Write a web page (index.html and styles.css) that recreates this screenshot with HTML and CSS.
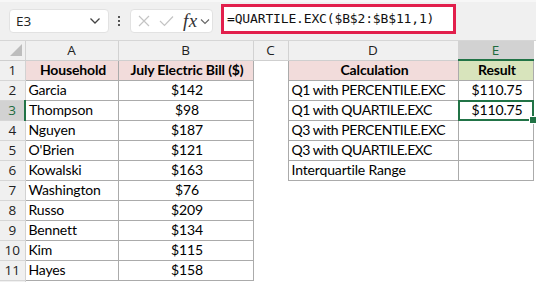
FILE: index.html
```html
<!DOCTYPE html>
<html>
<head>
<meta charset="utf-8">
<link rel="stylesheet" href="styles.css">
</head>
<body>
<div class="toolbar">
  <div class="namebox">
    <span class="ref">E3</span>
    <svg class="chev" width="12" height="8" viewBox="0 0 12 8"><path d="M1.5 1.5 L6 6 L10.5 1.5" fill="none" stroke="#444" stroke-width="1.3"/></svg>
  </div>
  <div class="dots"><i></i><i></i><i></i></div>
  <div class="fxbox">
    <svg class="ico" width="12" height="12" viewBox="0 0 12 12"><path d="M1 1 L11 11 M11 1 L1 11" stroke="#c4c4c4" stroke-width="1.2" fill="none"/></svg>
    <svg class="ico ok" width="15" height="12" viewBox="0 0 15 12"><path d="M1 6 L5.5 10.5 L14 1.5" stroke="#c4c4c4" stroke-width="1.2" fill="none"/></svg>
    <span class="fx">fx</span>
    <svg class="chev2" width="10" height="7" viewBox="0 0 10 7"><path d="M1 1.5 L5 5.5 L9 1.5" fill="none" stroke="#666" stroke-width="1.1"/></svg>
  </div>
  <div class="formula">=QUARTILE.EXC($B$2:$B$11,1)</div>
</div>
<table class="sheet">
  <colgroup>
    <col class="c-rh"><col class="c-a"><col class="c-b"><col class="c-c"><col class="c-d"><col class="c-e">
  </colgroup>
  <tr class="hdr">
    <td class="corner"><svg width="12" height="12" viewBox="0 0 12 12"><path d="M12 0 L12 12 L0 12 Z" fill="#bdbdbd"/></svg></td>
    <td class="ch">A</td><td class="ch">B</td><td class="ch">C</td><td class="ch">D</td><td class="ch sel">E</td>
  </tr>
  <tr>
    <td class="rh">1</td><td class="b th pink">Household</td><td class="b th pink">July Electric Bill ($)</td><td></td><td class="b th pink">Calculation</td><td class="b th green">Result</td>
  </tr>
  <tr><td class="rh">2</td><td class="b">Garcia</td><td class="b ctr">$142</td><td></td><td class="b tight">Q1 with PERCENTILE.EXC</td><td class="b ctr">$110.75</td></tr>
  <tr><td class="rh rsel">3</td><td class="b">Thompson</td><td class="b ctr">$98</td><td></td><td class="b tight">Q1 with QUARTILE.EXC</td><td class="b ctr active">$110.75</td></tr>
  <tr><td class="rh">4</td><td class="b">Nguyen</td><td class="b ctr">$187</td><td></td><td class="b tight">Q3 with PERCENTILE.EXC</td><td class="b"></td></tr>
  <tr><td class="rh">5</td><td class="b">O'Brien</td><td class="b ctr">$121</td><td></td><td class="b tight">Q3 with QUARTILE.EXC</td><td class="b"></td></tr>
  <tr><td class="rh">6</td><td class="b">Kowalski</td><td class="b ctr">$163</td><td></td><td class="b">Interquartile Range</td><td class="b"></td></tr>
  <tr><td class="rh">7</td><td class="b">Washington</td><td class="b ctr">$76</td><td></td><td></td><td></td></tr>
  <tr><td class="rh">8</td><td class="b">Russo</td><td class="b ctr">$209</td><td></td><td></td><td></td></tr>
  <tr><td class="rh">9</td><td class="b">Bennett</td><td class="b ctr">$134</td><td></td><td></td><td></td></tr>
  <tr><td class="rh">10</td><td class="b">Kim</td><td class="b ctr">$115</td><td></td><td></td><td></td></tr>
  <tr><td class="rh">11</td><td class="b">Hayes</td><td class="b ctr">$158</td><td></td><td></td><td></td></tr>
  <tr class="tail"><td class="rh"></td><td></td><td></td><td></td><td></td><td></td></tr>
</table>
</body>
</html>
```
FILE: styles.css
```css
* { box-sizing: border-box; }
html, body { margin: 0; padding: 0; background: #fff; }
body { width: 536px; height: 282px; overflow: hidden; font-family: Lato, "Liberation Sans", sans-serif; }

.toolbar {
  height: 41px;
  background: #f0f0f0;
  border-bottom: 1px solid #d6d6d6;
  display: flex;
  align-items: flex-start;
  border-top: 2px solid #f7f7f7;
}
.namebox {
  margin: 7px 0 0 9px;
  width: 100px; height: 24px;
  background: #fff;
  border: 1px solid #e2e2e2;
  border-radius: 4px;
  display: flex; align-items: center; justify-content: space-between;
  padding: 0 7px 0 6px;
}
.ref { font-family: "Open Sans", sans-serif; font-size: 13.5px; color: #222; }
.dots { margin: 14px 0 0 9px; width: 3px; display: flex; flex-direction: column; gap: 2px; }
.dots i { display: block; width: 2px; height: 2px; background: #555; }
.fxbox {
  margin: 7px 0 0 9px;
  width: 83px; height: 24px;
  background: #fff;
  border: 1px solid #e2e2e2;
  border-radius: 4px;
  display: flex; align-items: center;
  padding-left: 7px;
}
.ico.ok { margin-left: 9px; }
.fx { font-family: "Liberation Serif", serif; font-style: italic; font-size: 19px; line-height: 20px; color: #333; margin-left: 9px; letter-spacing: 0.5px; }
.chev2 { margin-left: 2px; }
.formula {
  margin: 2px 0 0 8px;
  width: 235px; height: 30px;
  background: #fff;
  border: 3px solid #e21f4c;
  font-family: "DejaVu Sans Mono", monospace;
  font-size: 13px;
  letter-spacing: -0.15px;
  color: #111;
  line-height: 24px;
  padding-left: 3px;
  white-space: nowrap;
}

.sheet { border-collapse: collapse; table-layout: fixed; width: 533px; font-size: 14px; letter-spacing: -0.15px; color: #000; }
.c-rh { width: 25px; } .c-a { width: 93px; } .c-b { width: 135px; } .c-c { width: 35px; } .c-d { width: 170px; } .c-e { width: 75px; }
.sheet td { height: 20px; padding: 0 0 0 3px; white-space: nowrap; overflow: hidden; line-height: 18px; }
.sheet td.tight { letter-spacing: -0.45px; }
.hdr td { height: 19px; background: #f0f0f0; border-right: 1px solid #d2d2d2; border-bottom: 1px solid #cfcfcf; text-align: center; font-family: "Open Sans", sans-serif; font-size: 13.5px; letter-spacing: 0; color: #222; padding: 0; }
.hdr .corner { text-align: right; padding: 3px 3px 0 0; vertical-align: top; }
.hdr .corner svg { display: block; margin-left: auto; }
.hdr .sel { background: #d2d2d2; color: #1e6b3e; border-bottom: 2px solid #217346; }
.rh { background: #f0f0f0; border-right: 1px solid #d2d2d2; border-bottom: 1px solid #d6d6d6; text-align: center; font-family: "Open Sans", sans-serif; font-size: 13.5px; letter-spacing: 0; color: #222; padding: 0 !important; }
.rh.rsel { background: #d2d2d2; color: #1e6b3e; border-right: 2px solid #217346; }
.tail td { height: 2px; }
.tail .rh { border-bottom: none; }
.b { border: 1px solid #ababab; }
.th { font-weight: bold; text-align: center; }
.pink { background: #f2dcdb; }
.green { background: #d8e4bc; }
.ctr { text-align: center; }
.active { position: relative; overflow: visible !important; }
.active::before { content: ""; position: absolute; left: -1px; top: -1px; right: -1px; bottom: -1px; border: 2px solid #217346; }
.active::after { content: ""; position: absolute; right: -4px; bottom: -4px; width: 6px; height: 6px; background: #217346; border: 1px solid #fff; }
```
